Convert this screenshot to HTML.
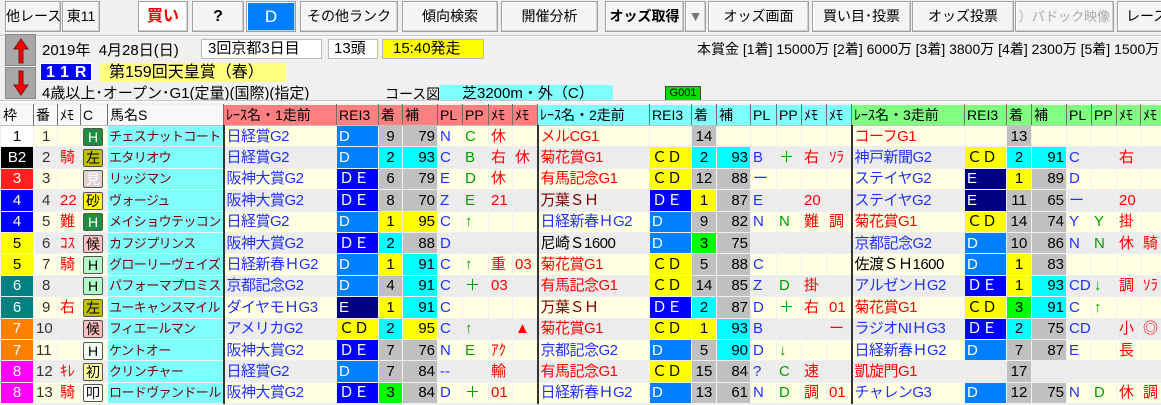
<!DOCTYPE html>
<html><head><meta charset="utf-8">
<style>
*{box-sizing:border-box;margin:0;padding:0}
body{width:1161px;height:405px;overflow:hidden;background:#f0f0f0;font-family:"Liberation Sans","Noto Sans CJK JP",sans-serif;position:relative;color:#000}
.a{position:absolute;white-space:nowrap}
.btn{position:absolute;top:1px;height:31px;background:#f4f4f4;border:1px solid #a0a0a0;box-shadow:inset -1px -1px 0 #d0d0d0,inset 1px 1px 0 #fff;font-size:14px;line-height:29px;text-align:center;overflow:hidden;white-space:nowrap}
table{position:absolute;left:0;top:104px;border-collapse:collapse;table-layout:fixed;width:1161px}
td{height:21.4px;border:1px solid transparent;font-size:15px;line-height:19px;padding:0 2px;overflow:hidden;white-space:nowrap}
thead td{height:21px;background:#f8f8f8;border-right:1px solid #707070;border-bottom:1px solid #c0c0c0;font-size:14px;padding:0 2px}
tr.o{background:#ffffe4}
tr.e{background:#ececec}
.f{text-align:center;color:#fff;font-size:15px}
.n{text-align:left;padding-left:8px;color:#333}
.m{color:#f00;text-align:left}
.hn{background:#80ffff;color:#700000;font-size:13px;letter-spacing:-0.6px;padding:0 0 0 1px;border-right:1px solid #333}
.rn{border-left:2px solid #333;letter-spacing:-0.5px}
.b{color:#2030ff}.r{color:#f00}.g{color:#00a000}.dr{color:#800000}.k{color:#000}
.D{background:#0080ff;color:#fff}.DE{background:#0000ff;color:#fff}.E{background:#000080;color:#fff}.CD{background:#ffff00;color:#000}
.y{background:#ffff00;text-align:center}.c{background:#00ffff;text-align:center}.gr{background:#c0c0c0;text-align:center}.lg{background:#00ff00;text-align:center}
.ho{text-align:right}
.cb{display:inline-block;width:20px;height:18px;border:1px solid #555;border-radius:2px;text-align:center;line-height:16px;font-size:14px;vertical-align:middle}
</style></head><body>
<div class="btn" style="left:5px;width:56px">他レース</div>
<div class="btn" style="left:62px;width:38px">東11</div>
<div class="btn" style="left:138px;width:50px;background:#fff;color:#f00;font-weight:bold;font-size:16px">買い</div>
<div class="btn" style="left:192px;width:52px;font-weight:bold;font-size:16px">?</div>
<div class="btn" style="left:246px;width:50px;background:#0080ff;color:#fff;font-size:17px">D</div>
<div class="btn" style="left:300px;width:98px">その他ランク</div>
<div class="btn" style="left:402px;width:96px">傾向検索</div>
<div class="btn" style="left:501px;width:97px">開催分析</div>
<div class="btn" style="left:605px;width:79px;font-weight:bold">オッズ取得</div>
<div class="btn" style="left:685px;width:21px;color:#777">▼</div>
<div class="btn" style="left:708px;width:101px">オッズ画面</div>
<div class="btn" style="left:812px;width:99px">買い目･投票</div>
<div class="btn" style="left:912px;width:102px">オッズ投票</div>
<div class="btn" style="left:1015px;width:99px;color:#aaa;font-size:13px">）パドック映像</div>
<div class="btn" style="left:1117px;width:60px;text-align:left;padding-left:8px">レース</div>
<div class="a" style="left:0;top:35px;width:1161px;height:2px;background:#fff;border-top:1px solid #c8c8c8"></div>
<div class="a" style="left:5px;top:34px;width:31px;height:32px;background:#a8a8a8;border:1px solid #888"></div>
<div class="a" style="left:5px;top:67px;width:31px;height:32px;background:#a8a8a8;border:1px solid #888"></div>
<svg class="a" style="left:13px;top:38px" width="16" height="26"><path d="M8 1 L15 11 L10 11 L10 25 L6 25 L6 11 L1 11 Z" fill="#f00" stroke="#600" stroke-width="0.8"/></svg>
<svg class="a" style="left:13px;top:70px" width="16" height="26"><path d="M8 25 L15 15 L10 15 L10 1 L6 1 L6 15 L1 15 Z" fill="#f00" stroke="#600" stroke-width="0.8"/></svg>
<div class="a" style="left:42px;top:39px;font-size:15px">2019年&nbsp; 4月28日(日)</div>
<div class="a" style="left:201px;top:39px;width:121px;height:20px;background:#fff;border:1px solid #bbb;font-size:15px;line-height:18px;padding-left:6px">3回京都3日目</div>
<div class="a" style="left:328px;top:39px;width:50px;height:20px;background:#fff;border:1px solid #bbb;font-size:15px;line-height:18px;padding-left:5px">13頭</div>
<div class="a" style="left:382px;top:39px;width:102px;height:20px;background:#ffff00;border:1px solid #bbb;font-size:15px;line-height:18px;padding-left:10px">15:40発走</div>
<div class="a" style="left:697px;top:39px;font-size:14px;line-height:20px">本賞金 [1着] 15000万 [2着] 6000万 [3着] 3800万 [4着] 2300万 [5着] 1500万</div>
<div class="a" style="left:40px;top:63px;width:52px;height:18px;background:#0000ff;color:#fff;font-size:16px;line-height:18px;font-weight:bold;letter-spacing:6px;padding-left:5px;border:1px solid #fff">11R</div>
<div class="a" style="left:100px;top:63px;width:186px;height:19px;background:#ffff80;font-size:16px;line-height:19px;padding-left:9px">第159回天皇賞（春）</div>
<div class="a" style="left:42px;top:84px;font-size:15px;line-height:19px">4歳以上･オープン･G1(定量)(国際)(指定)</div>
<div class="a" style="left:385px;top:85px;font-size:14px;line-height:18px;text-decoration:underline">コース図</div>
<div class="a" style="left:440px;top:85px;width:173px;height:18px;background:#80ffff;font-size:15px;line-height:18px;padding-left:22px">芝3200m・外（C）</div>
<div class="a" style="left:665px;top:86px;width:36px;height:15px;background:#00e000;border:1px solid #444;font-size:11px;line-height:13px;text-align:center">G001</div>
<div class="a" style="left:0;top:100px;width:1161px;height:3px;border-top:1px solid #c8c8c8;background:#fafafa"></div>
<table>
<colgroup><col style="width:33px"><col style="width:24px"><col style="width:23px"><col style="width:27px"><col style="width:116px"><col style="width:113px"><col style="width:42px"><col style="width:24px"><col style="width:35px"><col style="width:25px"><col style="width:26px"><col style="width:24px"><col style="width:25px"><col style="width:112px"><col style="width:42px"><col style="width:25px"><col style="width:34px"><col style="width:26px"><col style="width:25px"><col style="width:25px"><col style="width:25px"><col style="width:113px"><col style="width:42px"><col style="width:25px"><col style="width:35px"><col style="width:25px"><col style="width:25px"><col style="width:24px"><col style="width:21px"></colgroup>
<thead><tr><td>枠</td><td>番</td><td>ﾒﾓ</td><td>C</td><td>馬名S</td>
<td style="background:#ff8080">ﾚｰｽ名・1走前</td><td style="background:#ff8080">REI3</td><td style="background:#ff8080">着</td><td style="background:#ff8080">補</td><td style="background:#ff8080">PL</td><td style="background:#ff8080">PP</td><td style="background:#ff8080">ﾒﾓ</td><td style="background:#ff8080">ﾒﾓ</td>
<td style="background:#80ffff">ﾚｰｽ名・2走前</td><td style="background:#80ffff">REI3</td><td style="background:#80ffff">着</td><td style="background:#80ffff">補</td><td style="background:#80ffff">PL</td><td style="background:#80ffff">PP</td><td style="background:#80ffff">ﾒﾓ</td><td style="background:#80ffff">ﾒﾓ</td>
<td style="background:#80ff80">ﾚｰｽ名・3走前</td><td style="background:#80ff80">REI3</td><td style="background:#80ff80">着</td><td style="background:#80ff80">補</td><td style="background:#80ff80">PL</td><td style="background:#80ff80">PP</td><td style="background:#80ff80">ﾒﾓ</td><td style="background:#80ff80">ﾒﾓ</td></tr></thead>
<tbody>
<tr class="o"><td class="f" style="background:#fff;color:#000">1</td><td class="n">1</td><td class="m"></td><td><span class="cb" style="background:#1a9040;color:#fff">H</span></td><td class="hn">チェスナットコート</td>
<td class="rn b">日経賞G2</td><td class="D">D</td><td class="gr">9</td><td class="gr ho">79</td><td class="b">N</td><td class="g">C</td><td class="r">休</td><td></td>
<td class="rn r">メルCG1</td><td></td><td class="gr">14</td><td></td><td></td><td></td><td></td><td></td>
<td class="rn r">コーフG1</td><td></td><td class="gr">13</td><td></td><td></td><td></td><td></td><td></td></tr>
<tr class="e"><td class="f" style="background:#000">B2</td><td class="n">2</td><td class="m">騎</td><td><span class="cb" style="background:#c0c000">左</span></td><td class="hn">エタリオウ</td>
<td class="rn b">日経賞G2</td><td class="D">D</td><td class="c">2</td><td class="c ho">93</td><td class="b">C</td><td class="g">B</td><td class="r">右</td><td class="r">休</td>
<td class="rn r">菊花賞G1</td><td class="CD">ＣＤ</td><td class="c">2</td><td class="c ho">93</td><td class="b">B</td><td class="g">＋</td><td class="r">右</td><td class="r">ｿﾗ</td>
<td class="rn b">神戸新聞G2</td><td class="CD">ＣＤ</td><td class="c">2</td><td class="c ho">91</td><td class="b">C</td><td></td><td class="r">右</td><td></td></tr>
<tr class="o"><td class="f" style="background:#ff2020">3</td><td class="n">3</td><td class="m"></td><td><span class="cb" style="background:#e0d0d0;color:#fff">見</span></td><td class="hn">リッジマン</td>
<td class="rn b">阪神大賞G2</td><td class="DE">ＤＥ</td><td class="gr">6</td><td class="gr ho">79</td><td class="b">E</td><td class="g">D</td><td class="r">休</td><td></td>
<td class="rn r">有馬記念G1</td><td class="CD">ＣＤ</td><td class="gr">12</td><td class="gr ho">88</td><td class="b">ー</td><td></td><td></td><td></td>
<td class="rn b">ステイヤG2</td><td class="E">E</td><td class="y">1</td><td class="gr ho">89</td><td class="b">D</td><td></td><td></td><td></td></tr>
<tr class="e"><td class="f" style="background:#0000ff">4</td><td class="n">4</td><td class="m">22</td><td><span class="cb" style="background:#ffff00">砂</span></td><td class="hn">ヴォージュ</td>
<td class="rn b">阪神大賞G2</td><td class="DE">ＤＥ</td><td class="gr">8</td><td class="gr ho">70</td><td class="b">Z</td><td class="g">E</td><td class="r">21</td><td></td>
<td class="rn dr">万葉ＳＨ</td><td class="DE">ＤＥ</td><td class="y">1</td><td class="gr ho">87</td><td class="b">E</td><td></td><td class="r">20</td><td></td>
<td class="rn b">ステイヤG2</td><td class="E">E</td><td class="gr">11</td><td class="gr ho">65</td><td class="b">ー</td><td></td><td class="r">20</td><td></td></tr>
<tr class="o"><td class="f" style="background:#0000ff">4</td><td class="n">5</td><td class="m">難</td><td><span class="cb" style="background:#1a9040;color:#fff">H</span></td><td class="hn">メイショウテッコン</td>
<td class="rn b">日経賞G2</td><td class="D">D</td><td class="y">1</td><td class="y ho">95</td><td class="b">C</td><td class="g">↑</td><td></td><td></td>
<td class="rn b">日経新春ＨG2</td><td class="D">D</td><td class="gr">9</td><td class="gr ho">82</td><td class="b">N</td><td class="g">N</td><td class="r">難</td><td class="r">調</td>
<td class="rn r">菊花賞G1</td><td class="CD">ＣＤ</td><td class="gr">14</td><td class="gr ho">74</td><td class="b">Y</td><td class="g">Y</td><td class="r">掛</td><td></td></tr>
<tr class="e"><td class="f" style="background:#ffff00;color:#000">5</td><td class="n">6</td><td class="m">ｺｽ</td><td><span class="cb" style="background:#ffc0c0">候</span></td><td class="hn">カフジプリンス</td>
<td class="rn b">阪神大賞G2</td><td class="DE">ＤＥ</td><td class="c">2</td><td class="gr ho">88</td><td class="b">D</td><td></td><td></td><td></td>
<td class="rn k">尼崎Ｓ1600</td><td class="D">D</td><td class="lg">3</td><td class="gr ho">75</td><td></td><td></td><td></td><td></td>
<td class="rn b">京都記念G2</td><td class="D">D</td><td class="gr">10</td><td class="gr ho">86</td><td class="b">N</td><td class="g">N</td><td class="r">休</td><td class="r">騎</td></tr>
<tr class="o"><td class="f" style="background:#ffff00;color:#000">5</td><td class="n">7</td><td class="m">騎</td><td><span class="cb" style="background:#b0ffc8">H</span></td><td class="hn">グローリーヴェイズ</td>
<td class="rn b">日経新春ＨG2</td><td class="D">D</td><td class="y">1</td><td class="c ho">91</td><td class="b">C</td><td class="g">↑</td><td class="r">重</td><td class="r">03</td>
<td class="rn r">菊花賞G1</td><td class="CD">ＣＤ</td><td class="gr">5</td><td class="gr ho">88</td><td class="b">C</td><td></td><td></td><td></td>
<td class="rn k">佐渡ＳＨ1600</td><td class="D">D</td><td class="y">1</td><td class="gr ho">83</td><td></td><td></td><td></td><td></td></tr>
<tr class="e"><td class="f" style="background:#008080">6</td><td class="n">8</td><td class="m"></td><td><span class="cb" style="background:#b0ffc8">H</span></td><td class="hn">パフォーマプロミス</td>
<td class="rn b">京都記念G2</td><td class="D">D</td><td class="gr">4</td><td class="c ho">91</td><td class="b">C</td><td class="g">＋</td><td class="r">03</td><td></td>
<td class="rn r">有馬記念G1</td><td class="CD">ＣＤ</td><td class="gr">14</td><td class="gr ho">85</td><td class="b">Z</td><td class="g">D</td><td class="r">掛</td><td></td>
<td class="rn b">アルゼンＨG2</td><td class="DE">ＤＥ</td><td class="y">1</td><td class="c ho">93</td><td class="b">CD</td><td class="g">↓</td><td class="r">調</td><td class="r">ｿﾗ</td></tr>
<tr class="o"><td class="f" style="background:#008080">6</td><td class="n">9</td><td class="m">右</td><td><span class="cb" style="background:#c0c000">左</span></td><td class="hn">ユーキャンスマイル</td>
<td class="rn b">ダイヤモＨG3</td><td class="E">E</td><td class="y">1</td><td class="c ho">91</td><td class="b">C</td><td></td><td></td><td></td>
<td class="rn dr">万葉ＳＨ</td><td class="DE">ＤＥ</td><td class="c">2</td><td class="gr ho">87</td><td class="b">D</td><td class="g">＋</td><td class="r">右</td><td class="r">01</td>
<td class="rn r">菊花賞G1</td><td class="CD">ＣＤ</td><td class="lg">3</td><td class="c ho">91</td><td class="b">C</td><td class="g">↑</td><td></td><td></td></tr>
<tr class="e"><td class="f" style="background:#ff8000">7</td><td class="n" style="padding-left:2px">10</td><td class="m"></td><td><span class="cb" style="background:#ffc0c0">候</span></td><td class="hn">フィエールマン</td>
<td class="rn b">アメリカG2</td><td class="CD">ＣＤ</td><td class="c">2</td><td class="y ho">95</td><td class="b">C</td><td class="g">↑</td><td></td><td class="r">▲</td>
<td class="rn r">菊花賞G1</td><td class="CD">ＣＤ</td><td class="y">1</td><td class="c ho">93</td><td class="b">B</td><td></td><td></td><td class="r">ー</td>
<td class="rn b">ラジオNIＨG3</td><td class="DE">ＤＥ</td><td class="c">2</td><td class="gr ho">75</td><td class="b">CD</td><td></td><td class="r">小</td><td class="r">◎</td></tr>
<tr class="o"><td class="f" style="background:#ff8000">7</td><td class="n" style="padding-left:2px">11</td><td class="m"></td><td><span class="cb" style="background:#f0fff0">H</span></td><td class="hn">ケントオー</td>
<td class="rn b">阪神大賞G2</td><td class="DE">ＤＥ</td><td class="gr">7</td><td class="gr ho">76</td><td class="b">N</td><td class="g">E</td><td class="r">ｱｸ</td><td></td>
<td class="rn b">京都記念G2</td><td class="D">D</td><td class="gr">5</td><td class="c ho">90</td><td class="b">D</td><td class="g">↓</td><td></td><td></td>
<td class="rn b">日経新春ＨG2</td><td class="D">D</td><td class="gr">7</td><td class="gr ho">87</td><td class="b">E</td><td></td><td class="r">長</td><td></td></tr>
<tr class="e"><td class="f" style="background:#ff00ff">8</td><td class="n" style="padding-left:2px">12</td><td class="m">ｷﾚ</td><td><span class="cb" style="background:#ffffa0">初</span></td><td class="hn">クリンチャー</td>
<td class="rn b">日経賞G2</td><td class="D">D</td><td class="gr">7</td><td class="gr ho">84</td><td class="b">--</td><td></td><td class="r">輸</td><td></td>
<td class="rn r">有馬記念G1</td><td class="CD">ＣＤ</td><td class="gr">15</td><td class="gr ho">84</td><td class="b">?</td><td class="g">C</td><td class="r">速</td><td></td>
<td class="rn r">凱旋門G1</td><td></td><td class="gr">17</td><td></td><td></td><td></td><td></td><td></td></tr>
<tr class="o"><td class="f" style="background:#ff00ff">8</td><td class="n" style="padding-left:2px">13</td><td class="m">騎</td><td><span class="cb" style="background:#fff">叩</span></td><td class="hn">ロードヴァンドール</td>
<td class="rn b">阪神大賞G2</td><td class="DE">ＤＥ</td><td class="lg">3</td><td class="gr ho">84</td><td class="b">D</td><td class="g">＋</td><td class="r">01</td><td></td>
<td class="rn b">日経新春ＨG2</td><td class="D">D</td><td class="gr">13</td><td class="gr ho">61</td><td class="b">N</td><td class="g">D</td><td class="r">調</td><td class="r">01</td>
<td class="rn b">チャレンG3</td><td class="D">D</td><td class="gr">12</td><td class="gr ho">75</td><td class="b">N</td><td class="g">D</td><td class="r">休</td><td class="r">調</td></tr>
</tbody></table>
</body></html>
